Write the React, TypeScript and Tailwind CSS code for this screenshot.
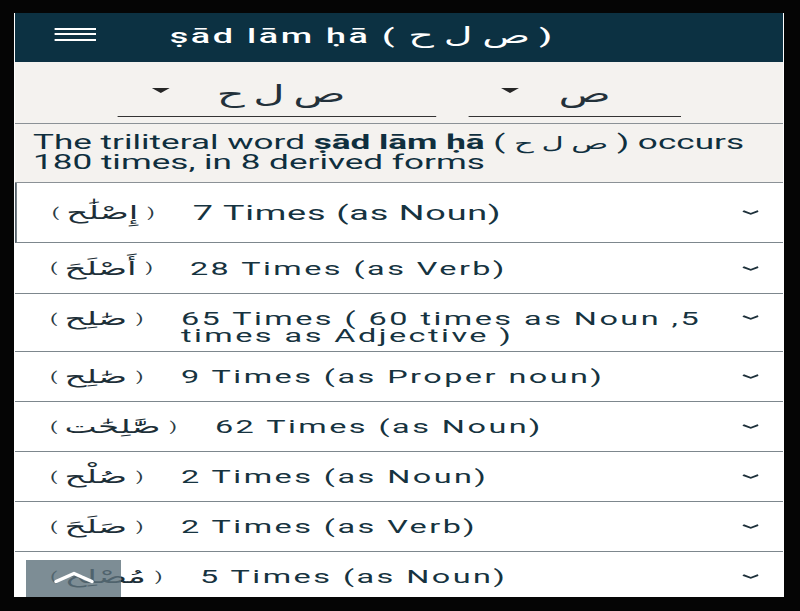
import React from 'react';

type Row = {
  ar: string;
  en: string[];
  arBox: string;
  h: string;
  big?: boolean;
};

const rows: Row[] = [
  { ar: 'إِصْلَٰح', en: ['7 Times (as Noun)'], arBox: 'w-[78.4px]', h: 'h-[60px]', big: true },
  { ar: 'أَصْلَحَ', en: ['28 Times (as Verb)'], arBox: 'w-[77.8px]', h: 'h-[51px]' },
  { ar: 'صَٰلِح', en: ['65 Times ( 60 times as Noun ,5', 'times as Adjective )'], arBox: 'w-[72.8px]', h: 'h-[58px]' },
  { ar: 'صَٰلِح', en: ['9 Times (as Proper noun)'], arBox: 'w-[72.8px]', h: 'h-[50px]' },
  { ar: 'صَّٰلِحَٰت', en: ['62 Times (as Noun)'], arBox: 'w-[91.7px]', h: 'h-[50px]' },
  { ar: 'صُلْح', en: ['2 Times (as Noun)'], arBox: 'w-[72.8px]', h: 'h-[50px]' },
  { ar: 'صَلَحَ', en: ['2 Times (as Verb)'], arBox: 'w-[72.8px]', h: 'h-[50px]' },
  { ar: 'مُصْلِح', en: ['5 Times (as Noun)'], arBox: 'w-[83.4px]', h: 'h-[50px]' },
];

function Caret() {
  return (
    <svg width="10" height="5" viewBox="0 0 10 5" className="shrink-0">
      <polygon points="0,0 10,0 5,5" fill="#262626" />
    </svg>
  );
}

function Chevron() {
  return (
    <svg width="9.5" height="5" viewBox="0 0 9.5 5" className="shrink-0">
      <polyline points="0.5,1 4.75,3.9 9,1" fill="none" stroke="#1e313b" strokeWidth="1.6" />
    </svg>
  );
}

function WordRow({ row }: { row: Row }) {
  const multi = row.en.length > 1;
  return (
    <div
      className={`flex ${row.h} border-b border-[#7d878d] pl-[19.4px] pr-[13.3px] ${
        multi ? 'items-start pt-[16px]' : 'items-center'
      } ${row.big ? 'border-l border-l-[#56636b]' : ''}`}
    >
      <div className={`${row.arBox} shrink-0 flex items-center h-[17px] text-[#1d2f38]`}>
        <span className="text-[12px] text-[#2b3b44]">(</span>
        <span dir="rtl" className="ml-[4px] text-[19px] leading-[17px] font-['DejaVu_Sans',sans-serif]">
          {row.ar}
        </span>
        <span className="ml-[5px] text-[12px] text-[#2b3b44]">)</span>
      </div>
      <div
        className={`flex-1 whitespace-nowrap text-[#163340] ${
          row.big ? 'text-[20px] leading-[20px] tracking-[0.45px]' : 'text-[18px] leading-[17px] tracking-[1.37px]'
        }`}
      >
        {row.en.map((line) => (
          <div key={line}>{line}</div>
        ))}
      </div>
      <div className={multi ? 'pt-[5px]' : ''}>
        <Chevron />
      </div>
    </div>
  );
}

export default function App() {
  return (
    <div className="w-[800px] h-[611px] bg-[#050505] pt-[13px] pl-[14px] font-['Roboto','DejaVu_Sans',sans-serif]">
      <div className="relative w-[770px] h-[584px] overflow-hidden border-x border-white bg-white">
        <div className="w-[426.67px] origin-top-left scale-x-[1.8]">
          {/* app bar */}
          <div className="flex items-center h-[49px] bg-[#0c3142]">
            <div className="ml-[22.2px] w-[22.8px] -mt-[7px] flex flex-col gap-[3.5px]">
              <div className="h-[2px] bg-white" />
              <div className="h-[2px] bg-white" />
              <div className="h-[2px] bg-white" />
            </div>
            <div className="ml-[41px] -mt-[4px] whitespace-nowrap text-white text-[20px] leading-[24px] font-medium tracking-[1.4px]">
              ṣād lām ḥā ( <span className="text-[22px]">ص ل ح</span> )
            </div>
          </div>

          {/* root pickers */}
          <div className="flex h-[62px] pt-[15px] bg-[#f4f2ef] border-b border-[#8b9196]">
            <div className="ml-[56.7px] w-[177.2px] h-[40px] flex items-center pl-[19px] pb-[6px] border-b border-[#333]">
              <div className="-mt-[6px]">
                <Caret />
              </div>
              <span className="ml-[26.4px] text-[24px] leading-[30px] text-[#23313a] font-['DejaVu_Sans',sans-serif]">
                ص{'\u2009'}ل{'\u2009'}ح
              </span>
            </div>
            <div className="ml-[18.3px] w-[117.8px] h-[40px] flex items-center pl-[17.8px] pb-[6px] border-b border-[#333]">
              <div className="-mt-[6px]">
                <Caret />
              </div>
              <span className="ml-[22px] text-[24px] leading-[30px] text-[#23313a] font-['DejaVu_Sans',sans-serif]">
                ص
              </span>
            </div>
          </div>

          {/* summary */}
          <div className="h-[59px] flex flex-col justify-center pl-[10px] bg-[#f4f2ef] border-b border-[#8b9196] text-[19.5px] leading-[20px] text-[#0f2f3e]">
            <div className="whitespace-nowrap h-[20px]">
              The triliteral word <span className="font-bold">ṣād lām ḥā</span> ({' '}
              <span className="text-[17px]">ص ل ح</span> ) occurs
            </div>
            <div className="whitespace-nowrap h-[20px]">180 times, in 8 derived forms</div>
          </div>

          {/* derived forms */}
          <div className="bg-white">
            {rows.map((row, i) => (
              <WordRow key={i} row={row} />
            ))}
          </div>
        </div>

        <button className="absolute left-[11px] top-[547px] w-[95px] h-[50px] bg-[#5d707b]/80 flex justify-center pt-[11px]">
          <svg width="42" height="13" viewBox="0 0 42 13">
            <polyline
              points="3,10.5 21,2.5 39,10.5"
              fill="none"
              stroke="#ffffff"
              strokeWidth="3.5"
              strokeLinecap="round"
              strokeLinejoin="round"
            />
          </svg>
        </button>
      </div>
    </div>
  );
}
